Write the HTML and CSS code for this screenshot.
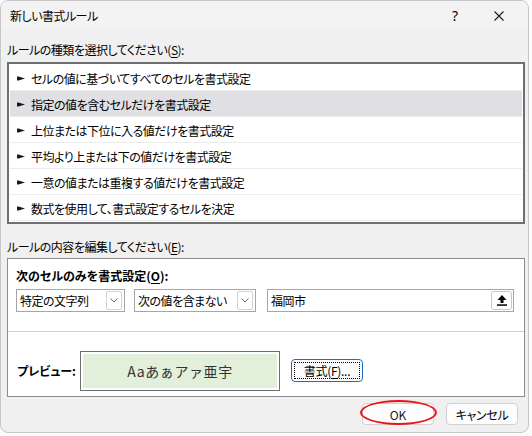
FILE: index.html
```html
<!DOCTYPE html>
<html lang="ja">
<head>
<meta charset="utf-8">
<title>新しい書式ルール</title>
<link rel="stylesheet" href="styles.css">
</head>
<body>
<div class="window">
  <div class="titlebar">
    <span class="title">新しい書式ルール</span>
    <span class="tb-btn help">?</span>
    <span class="tb-btn close">
      <svg width="10" height="10" viewBox="0 0 10 10"><path d="M0.5 0.5L9.5 9.5M9.5 0.5L0.5 9.5" stroke="#1a1a1a" stroke-width="1.1" fill="none"/></svg>
    </span>
  </div>
  <div class="content">
    <div class="label first">ルールの種類を選択してください(<u>S</u>):</div>
    <ul class="rule-list">
      <li><svg class="arrow" width="8" height="5" viewBox="0 0 8 5"><path d="M0 0.5H1.5L8 2.5L1.5 4.5H0Z" fill="#1a1a1a"/></svg>セルの値に基づいてすべてのセルを書式設定</li>
      <li class="selected"><svg class="arrow" width="8" height="5" viewBox="0 0 8 5"><path d="M0 0.5H1.5L8 2.5L1.5 4.5H0Z" fill="#1a1a1a"/></svg>指定の値を含むセルだけを書式設定</li>
      <li><svg class="arrow" width="8" height="5" viewBox="0 0 8 5"><path d="M0 0.5H1.5L8 2.5L1.5 4.5H0Z" fill="#1a1a1a"/></svg>上位または下位に入る値だけを書式設定</li>
      <li><svg class="arrow" width="8" height="5" viewBox="0 0 8 5"><path d="M0 0.5H1.5L8 2.5L1.5 4.5H0Z" fill="#1a1a1a"/></svg>平均より上または下の値だけを書式設定</li>
      <li><svg class="arrow" width="8" height="5" viewBox="0 0 8 5"><path d="M0 0.5H1.5L8 2.5L1.5 4.5H0Z" fill="#1a1a1a"/></svg>一意の値または重複する値だけを書式設定</li>
      <li><svg class="arrow" width="8" height="5" viewBox="0 0 8 5"><path d="M0 0.5H1.5L8 2.5L1.5 4.5H0Z" fill="#1a1a1a"/></svg>数式を使用して、書式設定するセルを決定</li>
    </ul>
    <div class="label second">ルールの内容を編集してください(<u>E</u>):</div>
    <div class="edit-box">
      <div class="edit-top">
        <div class="bold-label">次のセルのみを書式設定(<u>O</u>):</div>
        <div class="controls">
          <div class="combo combo1">
            <span class="combo-text">特定の文字列</span>
            <span class="combo-btn"><svg width="8" height="5" viewBox="0 0 8 5"><path d="M0.5 0.5L4 4L7.5 0.5" stroke="#6a6a6a" stroke-width="1" fill="none"/></svg></span>
          </div>
          <div class="combo combo2">
            <span class="combo-text">次の値を含まない</span>
            <span class="combo-btn"><svg width="8" height="5" viewBox="0 0 8 5"><path d="M0.5 0.5L4 4L7.5 0.5" stroke="#6a6a6a" stroke-width="1" fill="none"/></svg></span>
          </div>
          <div class="textfield">
            <span class="field-text">福岡市</span>
            <span class="ref-btn"><svg width="10" height="11" viewBox="0 0 10 11"><path d="M5 0L9.5 5H6.5V8H3.5V5H0.5Z" fill="#000"/><rect x="0" y="9.3" width="10" height="1.5" fill="#000"/></svg></span>
          </div>
        </div>
      </div>
      <div class="edit-bottom">
        <span class="bold-label preview-label">プレビュー:</span>
        <div class="preview"><div class="preview-inner">Aaあぁアァ亜宇</div></div>
        <button class="btn format"><span class="focus-ring">書式(<u>F</u>)...</span></button>
      </div>
    </div>
    <div class="footer">
      <div class="ok-wrap">
        <button class="btn ok">OK</button>
        <span class="mark"></span>
      </div>
      <button class="btn cancel">キャンセル</button>
    </div>
  </div>
</div>
</body>
</html>
```
FILE: styles.css
```css
* { box-sizing: border-box; }
html, body { margin: 0; padding: 0; }
body {
  width: 532px;
  height: 436px;
  overflow: hidden;
  background: #fbfbfb;
  font-family: "Noto Sans CJK JP", "Noto Sans", sans-serif;
  font-size: 12px;
  color: #000;
  font-feature-settings: "palt";
  letter-spacing: -0.5px;
}
u { text-decoration-thickness: 1px; text-underline-offset: 2px; }

.window {
  width: 529px;
  height: 433px;
  background: #f0f0f0;
  border: 1px solid #c6c6c6;
  border-radius: 8px;
  overflow: hidden;
  display: flex;
  flex-direction: column;
}
.titlebar {
  flex: none;
  height: 29px;
  background: #f3f3f3;
  display: flex;
  align-items: center;
  padding-left: 9px;
  padding-right: 6px;
}
.title { flex: 1; line-height: 16px; padding-top: 1px; }
.tb-btn {
  height: 29px;
  display: flex;
  align-items: center;
  justify-content: center;
}
.help { width: 40px; font-size: 14px; font-family: "Noto Sans", sans-serif; margin-right: 1px; letter-spacing: 0; }
.close { width: 46px; }

.content { padding: 0 3px 0 6px; }
.label { line-height: 16px; height: 16px; }
.label.first { margin-top: 12px; margin-bottom: 4px; }
.label.second { margin-top: 15px; margin-bottom: 3px; }

.rule-list {
  list-style: none;
  margin: 0;
  width: 518px;
  height: 162px;
  border: 2px solid #6f6f6f;
  background: #fff;
  padding: 1px;
}
.rule-list li {
  height: 26px;
  border-bottom: 1px solid #ececec;
  display: flex;
  align-items: center;
  padding-left: 7px;
  padding-top: 1px;
}
.rule-list li.selected { background: #dfdfe4; }
.arrow { flex: none; margin-right: 6px; }

.edit-box {
  width: 518px;
  height: 139px;
  border: 1px solid #8c8c8c;
  background: #fff;
}
.edit-top {
  height: 73px;
  border-bottom: 1px solid #d0d0d0;
  padding: 9px 0 0 8px;
}
.bold-label { font-weight: bold; line-height: 16px; letter-spacing: 0; }
.controls {
  margin-top: 5px;
  display: flex;
  height: 23px;
}
.combo, .textfield {
  height: 23px;
  border: 1px solid #a6a6a6;
  display: flex;
  align-items: center;
  background: #fff;
}
.combo1 { width: 109px; margin-right: 9px; }
.combo2 { width: 122px; margin-right: 11px; }
.textfield { width: 247px; }
.combo-text, .field-text { flex: 1; padding-left: 3px; line-height: 16px; }
.combo-btn {
  width: 16px;
  height: 19px;
  margin-right: 2px;
  border: 1px solid #d2d2d2;
  border-radius: 2px;
  display: flex;
  align-items: center;
  justify-content: center;
}
.ref-btn {
  width: 21px;
  height: 19px;
  margin-right: 1px;
  border: 1px solid #c8c8c8;
  border-radius: 3px;
  display: flex;
  align-items: center;
  justify-content: center;
}

.edit-bottom {
  display: flex;
  align-items: flex-start;
  padding: 19px 0 0 9px;
  height: 64px;
}
.preview-label { width: 63px; flex: none; margin-top: 12px; }
.preview {
  width: 200px;
  height: 40px;
  border: 1px solid #707070;
  padding: 2px;
  flex: none;
}
.preview-inner {
  height: 100%;
  background: #e2efda;
  display: flex;
  align-items: center;
  justify-content: center;
  font-size: 14px;
  color: #333;
  letter-spacing: 0.6px;
  font-feature-settings: normal;
}

.btn {
  font-family: inherit;
  font-size: 12px;
  color: #000;
  background: #fdfdfd;
  border: 1px solid #d0d0d0;
  border-radius: 4px;
  width: 72px;
  height: 22px;
  padding: 0;
  display: flex;
  align-items: center;
  justify-content: center;
  font-feature-settings: "palt";
  letter-spacing: -0.3px;
}
.btn.ok { letter-spacing: 0; color: #1a1a1a; }
.btn.format {
  margin-left: 11px;
  margin-top: 8px;
  height: 23px;
  border-color: #1a6fc4;
  padding: 2px;
}
.focus-ring {
  width: 100%;
  height: 100%;
  border: 1px dotted #000;
  display: flex;
  align-items: center;
  justify-content: center;
  line-height: 14px;
}

.footer {
  margin-top: 6px;
  display: flex;
  justify-content: flex-end;
  padding-right: 7px;
}
.ok-wrap { position: relative; margin-right: 12px; }
.mark {
  position: absolute;
  left: -2px;
  right: -3px;
  top: -3px;
  bottom: 0px;
  border: 2px solid #e8141b;
  border-radius: 50%;
}
```
